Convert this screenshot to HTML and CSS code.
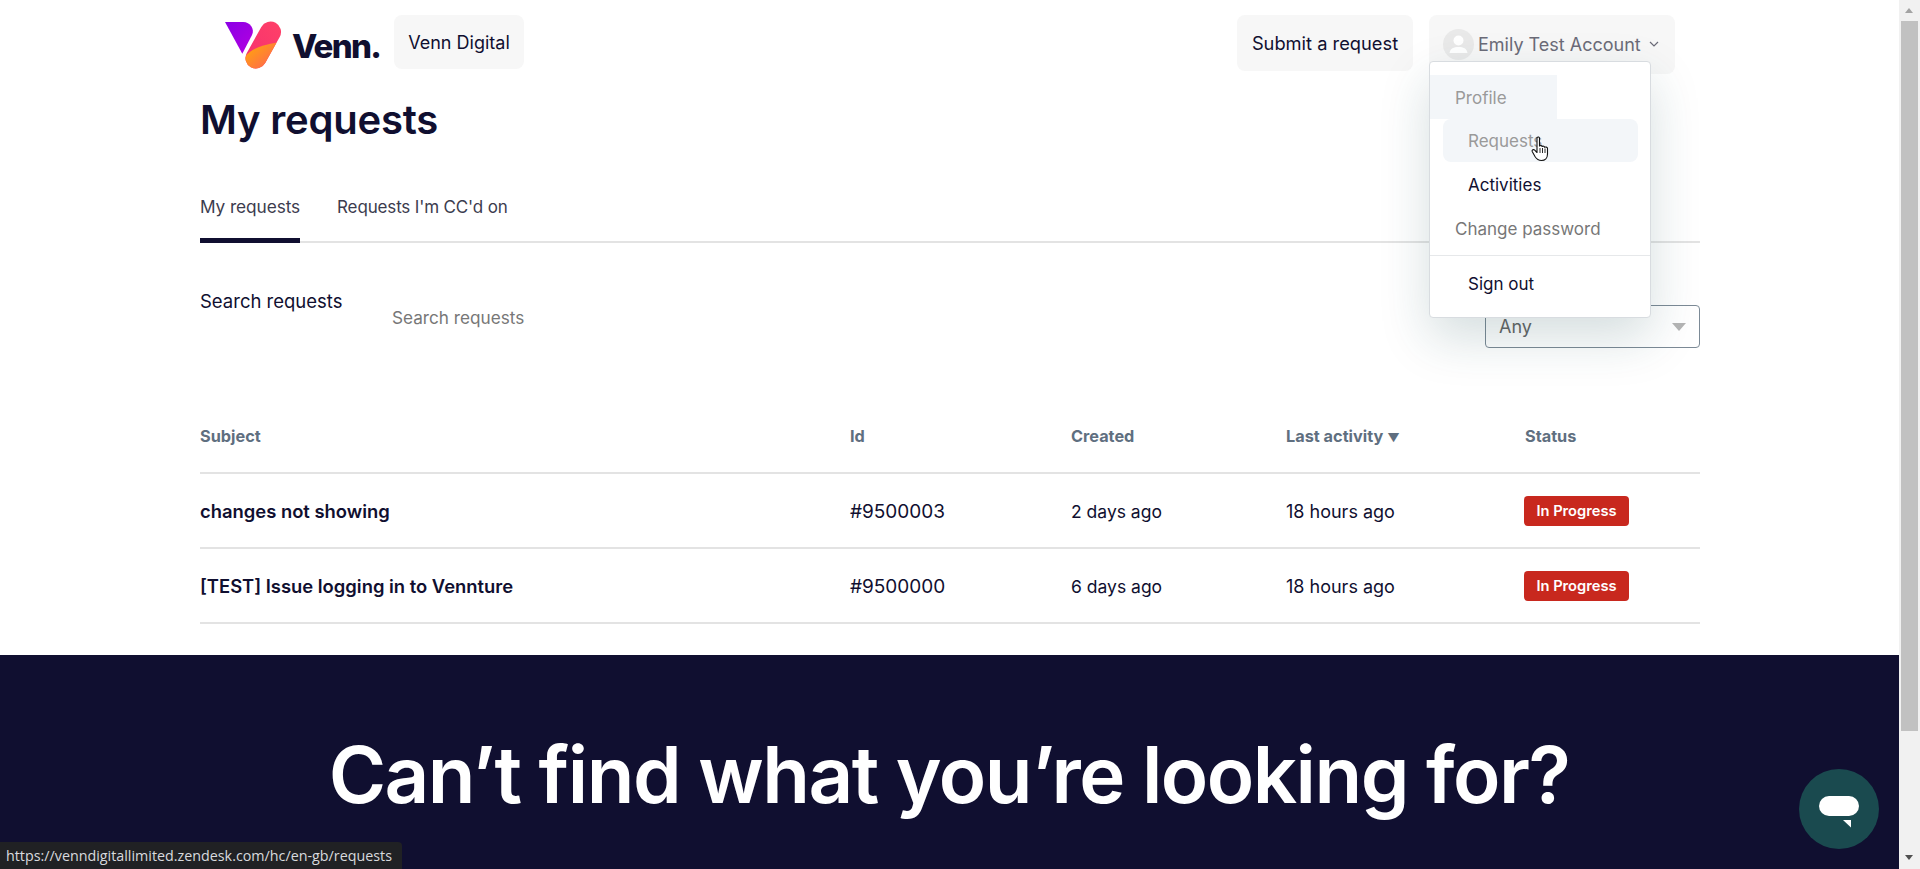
FILE: index.html
```html
<!DOCTYPE html>
<html lang="en-GB">
<head>
<meta charset="utf-8">
<title>My requests</title>
<link rel="stylesheet" href="styles.css">
</head>
<body>
<div class="app">
  <div class="page">
    <header class="topbar">
      <div class="brand">
        <svg class="logo-mark" width="58" height="48" viewBox="0 0 58 48">
          <defs>
            <linearGradient id="gv" x1="0" y1="0" x2="1" y2="1"><stop offset="0" stop-color="#8a00e6"/><stop offset="1" stop-color="#b400e0"/></linearGradient>
            <linearGradient id="gr" x1="0" y1="1" x2="1" y2="0"><stop offset="0" stop-color="#f5306f"/><stop offset="1" stop-color="#ff4068"/></linearGradient>
            <linearGradient id="go" x1="0" y1="0" x2="1" y2="1"><stop offset="0" stop-color="#ffb000"/><stop offset="1" stop-color="#ff5a5f"/></linearGradient>
            <clipPath id="capsule"><path d="M36.300 5.900A10.500 10.500 0 0 1 54.700 16.100L40.200 42.100A10.500 10.500 0 0 1 21.800 31.900Z"/></clipPath>
          </defs>
          <path d="M0 1H18.300C25 1 30 8 27 14L17.300 32.700Z" fill="url(#gv)"/>
          <path d="M36.300 5.900A10.500 10.500 0 0 1 54.700 16.100L40.200 42.100A10.500 10.500 0 0 1 21.800 31.900Z" fill="url(#gr)"/>
          <path d="M20 36C26 27 38 24 52 21.500L42 50H18Z" fill="url(#go)" clip-path="url(#capsule)"/>
        </svg>
        <span class="logo-word">Venn.</span>
      </div>
      <a class="chip chip-brand">Venn Digital</a>
      <div class="top-actions">
        <a class="chip chip-submit">Submit a request</a>
        <div class="user-wrap">
          <a class="chip chip-user">
            <span class="avatar">
              <svg width="31" height="31" viewBox="0 0 31 31"><circle cx="15.500" cy="11.500" r="5" fill="#fff"/><path d="M6.500 24C7 19.500 11 18 15.500 18S24 19.500 24.500 24Z" fill="#fff"/></svg>
            </span>
            <span>Emily Test Account</span>
            <svg class="chev" width="10" height="6" viewBox="0 0 10 6"><path d="M1 1L5 5L9 1" fill="none" stroke="#6b6b78" stroke-width="1.200"/></svg>
          </a>
          <nav class="menu">
            <a class="menu-item item-profile">Profile</a>
            <a class="menu-item item-requests">Requests</a>
            <a class="menu-item item-activities">Activities</a>
            <a class="menu-item item-password">Change password</a>
            <div class="menu-sep"></div>
            <a class="menu-item item-signout">Sign out</a>
          </nav>
          <svg class="cursor" width="20" height="26" viewBox="0 0 20 26">
            <path d="M6 1.500C7 .5 8.500 1 8.500 2.500V10C9.500 9 11 9.500 11 10.500C12 9.800 13.500 10.200 13.500 11.300C14.500 10.700 16.500 11 16.500 12.500V18C16.500 22 14 24.500 10.500 24.500C7.500 24.500 5.500 23 4 20.500L1.200 15.500C.6 14 2.500 13 3.700 14.200L6 16.500Z" fill="#fff" stroke="#111" stroke-width="1.100" stroke-linejoin="round"/>
            <path d="M9 12V17M11.500 12V17M14 12.500V17" stroke="#111" stroke-width=".9"/>
          </svg>
        </div>
      </div>
    </header>

    <main class="content">
      <h1 class="title">My requests</h1>
      <div class="tabs">
        <a class="tab tab-active">My requests</a>
        <a class="tab">Requests I'm CC'd on</a>
      </div>
      <div class="filters">
        <div class="search">
          <label class="search-label">Search requests</label>
          <span class="search-input">Search requests</span>
        </div>
        <div class="select">
          <span>Any</span>
          <span class="select-arrow"></span>
        </div>
      </div>
      <table class="requests">
        <thead>
          <tr>
            <th class="col-subject">Subject</th>
            <th class="col-id">Id</th>
            <th class="col-created">Created</th>
            <th class="col-activity">Last activity <span class="sort">▼</span></th>
            <th>Status</th>
          </tr>
        </thead>
        <tbody>
          <tr>
            <td class="subject">changes not showing</td>
            <td class="ticket-id">#9500003</td>
            <td class="created">2 days ago</td>
            <td>18 hours ago</td>
            <td><span class="badge">In Progress</span></td>
          </tr>
          <tr>
            <td class="subject">[TEST] Issue logging in to Vennture</td>
            <td class="ticket-id">#9500000</td>
            <td class="created">6 days ago</td>
            <td>18 hours ago</td>
            <td><span class="badge">In Progress</span></td>
          </tr>
        </tbody>
      </table>
    </main>

    <section class="hero">
      <h2 class="hero-title">Can’t find what you’re looking for?</h2>
    </section>
  </div>
  <aside class="scrollbar">
    <div class="scroll-up"></div>
    <div class="scroll-thumb"></div>
    <div class="scroll-down"></div>
  </aside>
</div>
<div class="status-url">https://venndigitallimited.zendesk.com/hc/en-gb/requests</div>
<button class="chat" aria-label="Chat">
  <svg width="40" height="32" viewBox="0 0 40 32"><rect x="0" y="0" width="40" height="20" rx="10" fill="#fff"/><path d="M24 24H32V31.500Z" fill="#fff"/></svg>
</button>
</body>
</html>
```
FILE: styles.css
```css
* { box-sizing: border-box; }
html, body { margin: 0; height: 869px; overflow: hidden; }
body { font-family: "Inter", "Noto Sans", sans-serif; color: #100f30; background: #fff; font-size: 18px; }
a { color: inherit; text-decoration: none; }

.app { display: flex; height: 869px; }
.page { width: 1899px; height: 869px; overflow: hidden; flex: none; }

.topbar { display: flex; align-items: flex-start; height: 91px; padding: 15px 224px 0 225px; }
.brand { display: flex; align-items: center; gap: 9px; width: 169px; height: 54px; }
.logo-mark { display: block; margin-top: 5px; flex: none; }
.logo-word { font-weight: 800; font-size: 33px; letter-spacing: -1.700px; color: #100f30; margin-top: 7px; }
.chip { display: flex; align-items: center; background: #f7f7f7; border-radius: 8px; }
.chip-brand { width: 130px; height: 54px; justify-content: center; font-size: 18px; }
.top-actions { display: flex; gap: 16px; margin-left: auto; }
.chip-submit { width: 176px; height: 56px; justify-content: center; font-size: 18.300px; }
.user-wrap { position: relative; }
.chip-user { width: 246px; height: 59px; padding: 0 0 1px 14px; color: #6b6b78; font-size: 18px; gap: 4px; }
.avatar { width: 31px; height: 31px; border-radius: 50%; background: #e9e9e9; display: block; overflow: hidden; }
.chev { margin-left: 4px; }

.menu { position: absolute; left: 0; top: 46px; width: 222px; height: 257px; background: #fff; border: 1px solid #d8dce0; border-radius: 4px; box-shadow: 0 20px 50px rgba(23, 73, 77, .18); padding-top: 14px; z-index: 5; font-size: 17px; }
.menu-item { display: block; height: 44px; line-height: 44px; padding-top: 1px; }
.item-profile { width: 127px; height: 44px; margin-top: -1px; padding-left: 25px; background: #f3f6f9; color: #9a9a9a; }
.item-requests { width: 195px; height: 43px; line-height: 43px; margin-left: 13px; padding-left: 25px; background: #f3f6f9; border-radius: 8px; color: #9a9a9a; }
.item-activities { margin-left: 38px; }
.item-password { padding-left: 25px; color: #777; }
.menu-sep { height: 1px; background: #e6e8ea; margin-top: 5px; }
.item-signout { margin-left: 38px; margin-top: 5px; }
.cursor { position: absolute; left: 102px; top: 121px; z-index: 6; }

.content { width: 1500px; margin-left: 200px; }
.title { margin: 0; height: 59px; line-height: 58px; font-size: 40px; font-weight: 600; letter-spacing: -.2px; color: #100f30; }
.tabs { display: flex; gap: 37px; height: 93px; padding-top: 40px; border-bottom: 2px solid #e3e3e3; }
.tab { height: 53px; line-height: 34px; font-size: 17px; letter-spacing: -.15px; color: #3c3c4e; }
.tab-active { border-bottom: 5px solid #100f30; font-size: 17.300px; letter-spacing: -.1px; }

.filters { display: flex; justify-content: space-between; height: 120px; }
.search { display: flex; }
.search-label { margin-top: 45px; height: 26px; line-height: 26px; width: 192px; font-size: 18.500px; }
.search-input { margin-top: 62px; height: 26px; line-height: 26px; color: #777; font-size: 17.200px; }
.select { display: flex; align-items: center; justify-content: space-between; width: 215px; height: 43px; margin-top: 62px; padding: 0 13px; border: 1px solid #7c8a96; border-radius: 4px; color: #666; font-size: 18px; }
.select-arrow { width: 0; height: 0; border-left: 7px solid transparent; border-right: 7px solid transparent; border-top: 8px solid #b5b5b5; }

.requests { width: 1500px; border-collapse: collapse; table-layout: fixed; }
.requests th { height: 110px; padding: 36px 0 0; text-align: left; font-size: 16.300px; font-weight: 700; color: #5f6f80; border-bottom: 2px solid #e3e3e3; }
.requests td { height: 75px; padding: 1px 0 0; font-size: 18px; border-bottom: 2px solid #e3e3e3; }
.col-subject { width: 650px; }
.col-id { width: 221px; }
.col-created { width: 215px; }
.col-activity { width: 239px; }
.sort { font-size: 12px; color: #5f6f80; }
.requests .subject { font-weight: 600; font-size: 18.400px; }
.requests .ticket-id { font-size: 19px; }
.requests .created { font-size: 17.500px; }
.badge { display: inline-block; width: 105px; height: 30px; margin-left: -1px; line-height: 30px; text-align: center; background: #c8281e; color: #fff; font-size: 14.700px; font-weight: 600; border-radius: 4px; }

.hero { margin-top: 31px; height: 300px; background: #100f30; }
.hero-title { margin: 0; padding: 70px 1px 0 0; text-align: center; color: #fff; font-size: 78px; letter-spacing: -1.520px; font-weight: 600; line-height: 100px; }

.scrollbar { width: 21px; height: 869px; background: #f1f1f1; padding: 21px 1px 0 2px; position: relative; }
.scroll-thumb { width: 17px; height: 710px; background: #c1c1c1; }
.scroll-up { position: absolute; left: 6px; top: 8px; width: 0; height: 0; border-left: 4.500px solid transparent; border-right: 4.500px solid transparent; border-bottom: 5px solid #a3a3a3; }
.scroll-down { position: absolute; left: 6px; bottom: 9px; width: 0; height: 0; border-left: 4.500px solid transparent; border-right: 4.500px solid transparent; border-top: 5px solid #505050; }

.status-url { position: fixed; left: 0; bottom: 0; width: 402px; height: 27px; line-height: 27px; padding-left: 6px; background: #202124; color: #d8dade; font-size: 14.300px; border-top-right-radius: 4px; font-family: "Open Sans", sans-serif; white-space: nowrap; }
.chat { position: fixed; left: 1799px; top: 769px; width: 80px; height: 80px; border: 0; border-radius: 50%; background: #1a4a4f; padding: 0; display: flex; align-items: center; justify-content: center; }
.chat svg { display: block; margin-top: 6px; }
```
